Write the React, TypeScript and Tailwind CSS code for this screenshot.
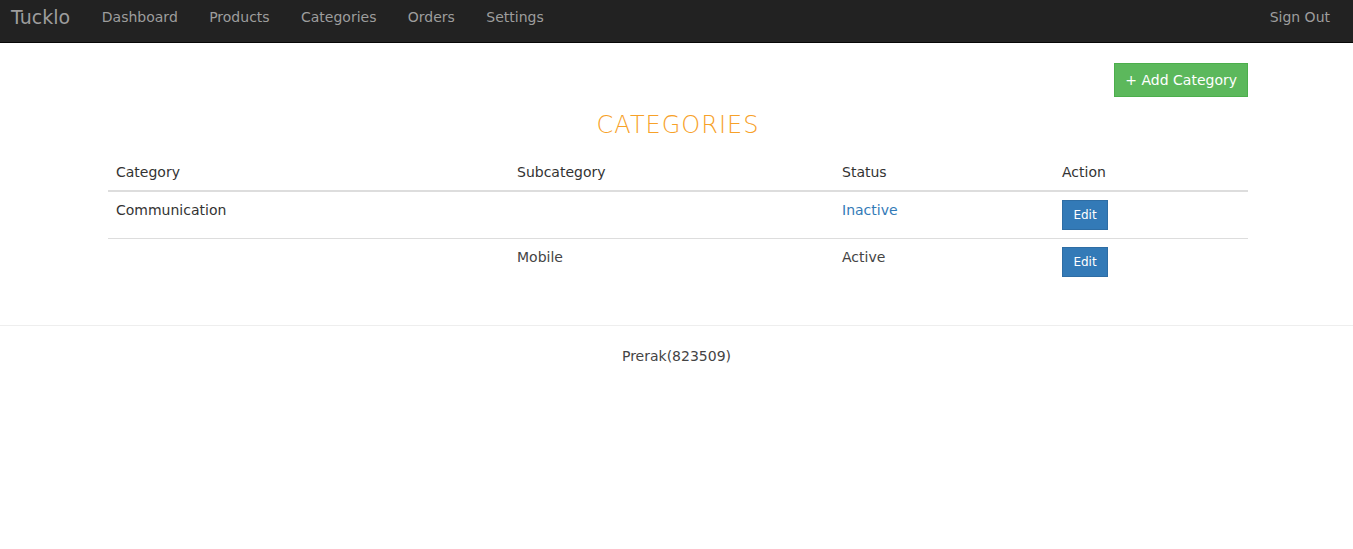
const navLinks: string[] = ["Dashboard", "Products", "Categories", "Orders", "Settings"];

const rows = [
  { category: "Communication", subcategory: "", status: "Inactive" },
  { category: "", subcategory: "Mobile", status: "Active" },
];

const App = () => {
  return (
    <div className="min-h-screen bg-white font-['DejaVu_Sans',sans-serif] text-[#333]">
      {/* Top bar */}
      <nav className="h-[43px] bg-[#222] border-b border-[#080808] flex items-start justify-between pt-[6px]">
        <div className="flex items-start">
          <span className="pl-[11px] pr-[16px] text-[19px] leading-[22px] text-[#9d9d9d]">Tucklo</span>
          {navLinks.map((link) => (
            <a key={link} href="#" className="px-[15.7px] pt-[1px] text-[14px] leading-[20px] text-[#9d9d9d]">
              {link}
            </a>
          ))}
        </div>
        <a href="#" className="pr-[23px] pt-[1px] text-[14px] leading-[20px] text-[#9d9d9d]">Sign Out</a>
      </nav>

      <div className="w-[1140px] ml-[108px] pt-[20px]">
        <div className="flex justify-end">
          <button className="h-[34px] px-[10px] bg-[#5cb85c] border border-[#4cae4c] text-white text-[14px]">
            + Add Category
          </button>
        </div>

        <h2 className="mt-[14px] text-center text-[24px] leading-[28px] font-light text-[#f7a128] tracking-[1px]">CATEGORIES</h2>

        <table className="w-full mt-[17px] text-[14px] border-collapse">
          <thead>
            <tr className="border-b-2 border-[#ddd]">
              <th className="w-[401px] text-left font-medium px-[8px] pt-[6px] pb-[7px]">Category</th>
              <th className="w-[325px] text-left font-medium px-[8px] pt-[6px] pb-[7px]">Subcategory</th>
              <th className="w-[220px] text-left font-medium px-[8px] pt-[6px] pb-[7px]">Status</th>
              <th className="text-left font-medium px-[8px] pt-[6px] pb-[7px]">Action</th>
            </tr>
          </thead>
          <tbody>
            {rows.map((row, i) => (
              <tr key={i} className={i === 0 ? "border-b border-[#ddd]" : ""}>
                <td className="align-top px-[8px] pt-[8px] pb-[8px] font-medium">{row.category}</td>
                <td className="align-top px-[8px] pt-[8px] pb-[8px] text-[#444]">{row.subcategory}</td>
                <td className={"align-top px-[8px] pt-[8px] pb-[8px] " + (row.status === "Inactive" ? "text-[#337ab7]" : "text-[#444]")}>
                  {row.status}
                </td>
                <td className="align-top px-[8px] pt-[8px] pb-[8px]">
                  <button className="h-[30px] w-[46px] bg-[#337ab7] border border-[#2e6da4] text-white text-[12px]">Edit</button>
                </td>
              </tr>
            ))}
          </tbody>
        </table>
      </div>

      <footer className="mt-[40px] border-t border-[#eee] pt-[20px] text-center text-[14px] text-[#444]">
        Prerak(823509)
      </footer>
    </div>
  );
};

export default App;
